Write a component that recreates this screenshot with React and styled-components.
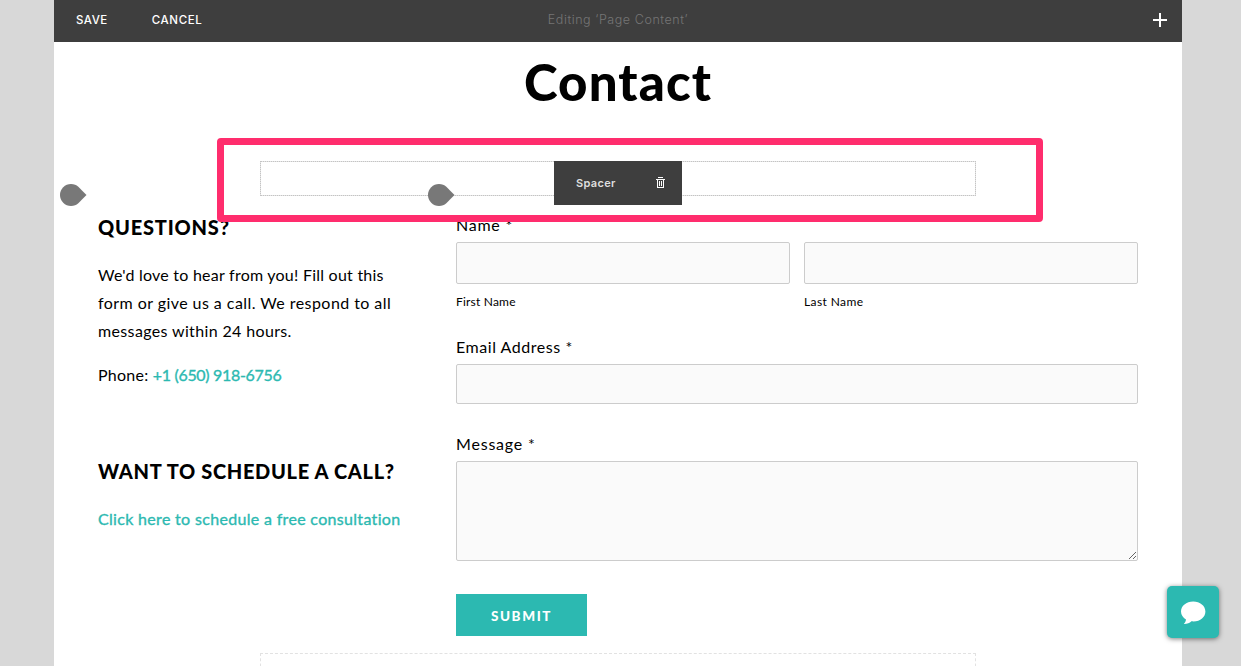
import styled, { createGlobalStyle } from "styled-components";

const GlobalStyle = createGlobalStyle`
  * {
    box-sizing: border-box;
  }
  body {
    margin: 0;
    background-color: #d8d8d8;
    font-family: Lato, "Liberation Sans", sans-serif;
    color: #000;
    overflow: hidden;
  }
`;
const Page = styled.div`
  position: relative;
  width: 1128px;
  height: 666px;
  margin-left: 54px;
  background-color: #fff;
  overflow: hidden;
`;
const Toolbar = styled.div`
  display: grid;
  grid-template-columns: 1fr auto 1fr;
  align-items: center;
  height: 42px;
  padding: 0 15px 2px;
  background-color: #3e3e3e;
`;
const Actions = styled.div`
  display: flex;
  gap: 44px;
  padding-left: 7px;
`;
const Action = styled.button`
  padding: 0;
  border: none;
  background: none;
  color: #fff;
  font-family: Inter, sans-serif;
  font-size: 11.5px;
  font-weight: 500;
  line-height: 16px;
  letter-spacing: ${(props) => props.spacing};
`;
const Status = styled.span`
  padding-bottom: 1px;
  color: #757575;
  font-family: Inter, sans-serif;
  font-size: 12.5px;
  font-weight: 300;
  letter-spacing: 0.57px;
`;
const AddButton = styled.button`
  justify-self: end;
  display: flex;
  padding: 0;
  border: none;
  background: none;
`;
const Title = styled.h1`
  margin: 0;
  height: 119px;
  padding-top: 10px;
  font-size: 51px;
  font-weight: 900;
  line-height: 60px;
  letter-spacing: 1.1px;
  text-align: center;
`;
const Spacer = styled.div`
  position: relative;
  width: 716px;
  height: 35px;
  margin: 0 auto;
  border: 1px dotted #c4c4c4;
  background: linear-gradient(#fff, #fff) padding-box, #e4e4e4 border-box;
`;
const SpacerMenu = styled.div`
  position: absolute;
  top: -1px;
  left: 293px;
  z-index: 2;
  display: flex;
  align-items: center;
  justify-content: space-between;
  width: 128px;
  height: 44px;
  padding: 0 16px 0 22px;
  background-color: #3e3e3e;
  color: #dedede;
  font-family: Inter, sans-serif;
  font-size: 11px;
  font-weight: 600;
  letter-spacing: 0.35px;
`;
const Highlight = styled.div`
  position: absolute;
  top: 138px;
  left: 163px;
  z-index: 3;
  width: 826px;
  height: 84px;
  border: 7px solid #ff2d6d;
  border-radius: 4px;
  pointer-events: none;
`;
const Marker = styled.svg`
  position: absolute;
  top: 184px;
  left: ${(props) => props.$left};
  z-index: 2;
`;
const Columns = styled.div`
  display: grid;
  grid-template-columns: 314px 682px;
  column-gap: 44px;
  padding: 15px 44px 0;
`;
const Info = styled.div`
  padding-top: 2px;
`;
const Heading = styled.h2`
  margin: 0 0 20px;
  font-size: 20px;
  font-weight: 900;
  line-height: 28px;
  letter-spacing: ${(props) => props.spacing};
  white-space: nowrap;
`;
const Text = styled.p`
  margin: 0 0 ${(props) => props.$gap || "16px"};
  font-size: 16px;
  line-height: 28px;
  white-space: nowrap;
`;
const Line = styled.span`
  display: ${(props) => (props.$inline ? "inline" : "block")};
  letter-spacing: ${(props) => props.spacing};
`;
const Anchor = styled.a`
  color: #2cb9b1;
  -webkit-text-stroke: 0.35px #2cb9b1;
  letter-spacing: ${(props) => props.spacing};
`;
const Form = styled.form`
  display: flex;
  flex-direction: column;
`;
const Label = styled.label`
  margin-bottom: 3px;
  font-size: 16px;
  line-height: 28px;
  letter-spacing: ${(props) => props.spacing};
`;
const NameFields = styled.div`
  display: grid;
  grid-template-columns: 1fr 1fr;
  gap: 14px;
  margin-bottom: 21px;
`;
const Field = styled.label`
  display: flex;
  flex-direction: column;
  gap: 8px;
  font-size: 12px;
  line-height: 20px;
  letter-spacing: ${(props) => props.spacing};
`;
const Input = styled.input`
  width: 100%;
  height: ${(props) => props.$height};
  margin-bottom: ${(props) => props.$gap || 0};
  border: 1px solid #ccc;
  border-radius: 2px;
  background-color: #fafafa;
`;
const TextArea = styled.textarea`
  display: block;
  width: 100%;
  height: 100px;
  margin-bottom: 33px;
  border: 1px solid #ccc;
  border-radius: 2px;
  background-color: #fafafa;
`;
const Submit = styled.button`
  width: 131px;
  height: 42px;
  padding: 1px 0 0;
  border: none;
  background-color: #2cb9b1;
  color: #fff;
  font-family: inherit;
  font-size: 13.5px;
  font-weight: 900;
  letter-spacing: 1.6px;
`;
const DropZone = styled.div`
  width: 716px;
  height: 40px;
  margin: 17px auto 0;
  border: 1px dashed #e2e2e2;
`;
const ChatButton = styled.button`
  position: fixed;
  top: 586px;
  left: 1167px;
  display: flex;
  align-items: center;
  justify-content: center;
  width: 52px;
  height: 52px;
  padding: 1px 0 0;
  border: none;
  border-radius: 5px;
  background-color: #2cb9b1;
  box-shadow: 0 1px 5px rgba(0, 0, 0, 0.5);
`;

function DropMarker({ left }) {
  return (
    <Marker $left={left} width="27" height="22" viewBox="0 0 27 22">
      <path
        fill="#787878"
        d="M11 0a11 11 0 1 0 0 22c3 0 5.400-1 7.300-2.800L26.500 11 18.300 2.800C16.400 1 14 0 11 0z"
      />
    </Marker>
  );
}

function App() {
  return (
    <>
      <GlobalStyle />
      <Page>
        <Toolbar>
          <Actions>
            <Action spacing="0.5px">SAVE</Action>
            <Action spacing="0.6px">CANCEL</Action>
          </Actions>
          <Status>Editing ‘Page Content’</Status>
          <AddButton aria-label="Add">
            <svg width="14" height="14" viewBox="0 0 14 14">
              <path d="M6 0h2v6h6v2H8v6H6V8H0V6h6z" fill="#fff" />
            </svg>
          </AddButton>
        </Toolbar>
        <Title>Contact</Title>
        <Spacer>
          <SpacerMenu>
            Spacer
            <svg width="11" height="12" viewBox="0 0 11 12" fill="#fff">
              <path d="M3 0h5v1H3zM1 2h9v1H1zM2 3h1v8H2zM8 3h1v8H8zM2 10h7v1H2zM4 4h1v5H4zM6 4h1v5H6z" />
            </svg>
          </SpacerMenu>
        </Spacer>
        <Columns>
          <Info>
            <Heading spacing="0.8px">QUESTIONS?</Heading>
            <Text>
              <Line spacing="0.24px">We'd love to hear from you! Fill out this</Line>
              <Line spacing="0.44px">form or give us a call. We respond to all</Line>
              <Line spacing="0.36px">messages within 24 hours.</Line>
            </Text>
            <Text $gap="68px">
              <Line $inline spacing="0.25px">Phone: </Line>
              <Anchor spacing="-0.32px">+1 (650) 918-6756</Anchor>
            </Text>
            <Heading spacing="0.67px">WANT TO SCHEDULE A CALL?</Heading>
            <Text>
              <Anchor spacing="0.32px">Click here to schedule a free consultation</Anchor>
            </Text>
          </Info>
          <Form>
            <Label spacing="0.75px">Name *</Label>
            <NameFields>
              <Field spacing="0.2px">
                <Input $height="42px" />
                First Name
              </Field>
              <Field spacing="0.4px">
                <Input $height="42px" />
                Last Name
              </Field>
            </NameFields>
            <Label spacing="0.55px">Email Address *</Label>
            <Input $height="40px" $gap="26px" />
            <Label spacing="0.8px">Message *</Label>
            <TextArea />
            <Submit type="button">SUBMIT</Submit>
          </Form>
        </Columns>
        <DropZone />
        <DropMarker left="6px" />
        <DropMarker left="374px" />
        <Highlight />
      </Page>
      <ChatButton aria-label="Chat">
        <svg width="26" height="24" viewBox="0 0 26 24">
          <path
            fill="#fff"
            d="M13.200 0.500C6.300 0.500 1 4.900 1 10.500c0 3.400 2 6.200 5 8-.2 1.700-1 3.200-2.200 4.600 3.300.1 5.800-1 7.600-2.800 8.100.9 14-3.700 14-9.800 0-5.600-5.300-10-12.200-10z"
          />
        </svg>
      </ChatButton>
    </>
  );
}

export default App;
